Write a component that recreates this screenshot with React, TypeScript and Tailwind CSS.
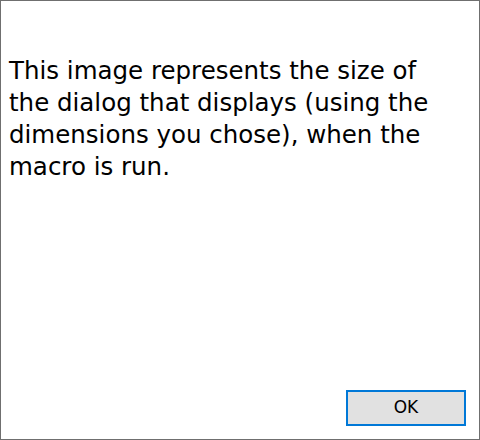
import React from "react";

export default function App() {
  return (
    <div className="w-[480px] h-[440px] bg-white border border-[#6f6f6f] flex flex-col font-['DejaVu_Sans',Tahoma,sans-serif]">
      <div className="pl-[8px] pt-[54px] text-[24.5px] leading-[32px] text-black">
        This image represents the size of
        <br />
        the dialog that displays (using the
        <br />
        dimensions you chose), when the
        <br />
        macro is run.
      </div>
      <div className="flex-1" />
      <div className="flex justify-end pr-[13px] pb-[13px]">
        <button className="w-[120px] h-[36px] bg-[#e1e1e1] border-2 border-[#0078d7] text-[17px] text-black">
          OK
        </button>
      </div>
    </div>
  );
}
